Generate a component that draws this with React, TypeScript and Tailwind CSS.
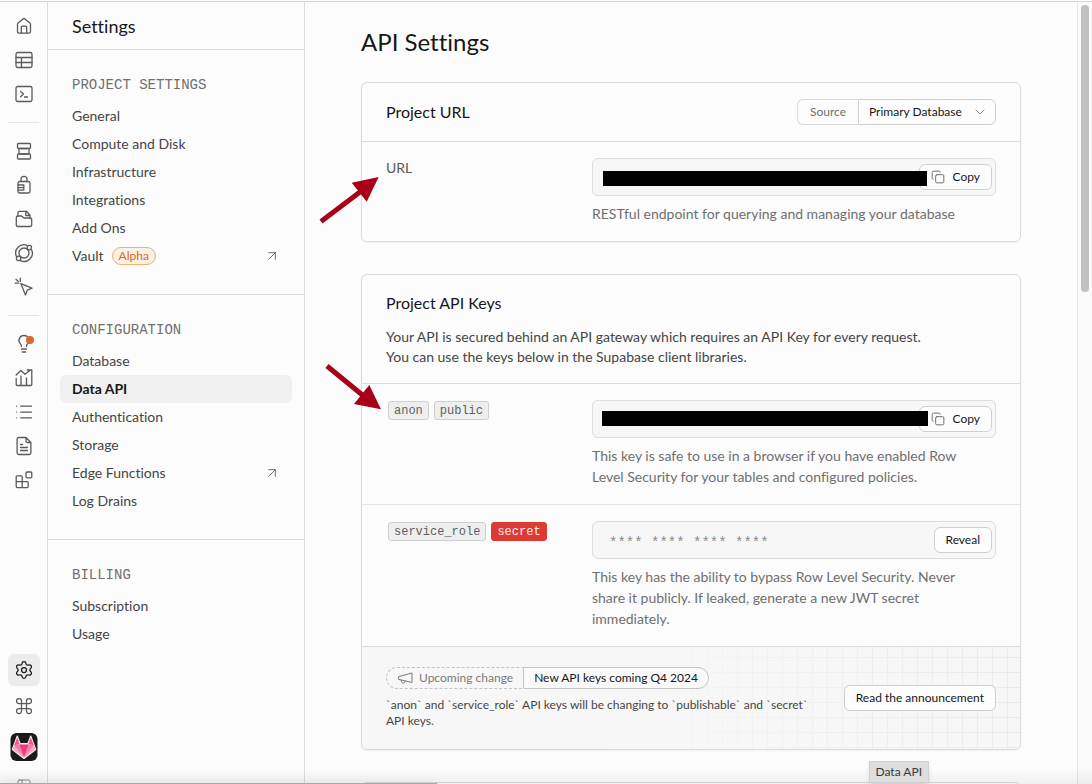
import type { ReactNode } from 'react';
import { ArrowUpRight, ChevronDown, Command, Copy, List, PanelLeft, Settings } from 'lucide-react';

function Glyph({ children }: { children: ReactNode }) {
  return (
    <svg
      width="20"
      height="20"
      viewBox="0 0 20 20"
      fill="none"
      stroke="currentColor"
      strokeWidth="1.3"
      strokeLinecap="round"
      strokeLinejoin="round"
      aria-hidden="true"
    >
      {children}
    </svg>
  );
}

type RailItem = { label: string; icon: ReactNode; dot?: boolean };

const editorItems: RailItem[] = [
  {
    label: 'Home',
    icon: (
      <Glyph>
        <path d="M3.500 8.200c0-.6.200-1 .6-1.300l4.900-4c.6-.5 1.400-.5 2 0l4.900 4c.4.300.6.700.6 1.300v7.400c0 .9-.7 1.600-1.600 1.600H5.100c-.9 0-1.600-.7-1.600-1.600z" />
        <path d="M7.300 17v-5.800c0-.6.400-1 1-1h3.400c.6 0 1 .4 1 1V17" />
      </Glyph>
    ),
  },
  {
    label: 'Table Editor',
    icon: (
      <Glyph>
        <rect x="2" y="2.500" width="16" height="15" rx="1.700" />
        <path d="M2 7.500h16M2 12.500h16M7.500 7.500v10" />
      </Glyph>
    ),
  },
  {
    label: 'SQL Editor',
    icon: (
      <Glyph>
        <rect x="2" y="2.500" width="16" height="15" rx="1.700" />
        <path d="M6.500 7.500 9.500 10l-3 2.800M10.500 13h3" />
      </Glyph>
    ),
  },
];

const productItems: RailItem[] = [
  {
    label: 'Database',
    icon: (
      <Glyph>
        <rect x="3.500" y="2.500" width="13" height="5" rx="1" />
        <rect x="3.500" y="13" width="13" height="5" rx="1" />
        <path d="M5 7.500V13M15 7.500V13M6.500 7.500h7M6.500 13h7" />
      </Glyph>
    ),
  },
  {
    label: 'Authentication',
    icon: (
      <Glyph>
        <rect x="4" y="6.500" width="12" height="11.500" rx="1.700" />
        <path d="M7 6.500V4.300a3 3 0 0 1 6 0v2.200M4 10h5.500M4 12.600h5.500M4 15.200h5.500M9.800 10v5.200" />
      </Glyph>
    ),
  },
  {
    label: 'Storage',
    icon: (
      <Glyph>
        <path d="M4 7V3.700C4 2.800 4.600 2.300 5.400 2.300h7L16 6v3M11.800 2.500V6.500H16" />
        <path d="M2.300 8.500c0-.9.600-1.500 1.500-1.500H7.500l2.500 2h6.200c.9 0 1.500.6 1.500 1.500v5.300c0 1-.7 1.700-1.700 1.700H4c-1 0-1.700-.7-1.700-1.700z" />
      </Glyph>
    ),
  },
  {
    label: 'Edge Functions',
    icon: (
      <Glyph>
        <circle cx="10" cy="10" r="5" />
        <path d="M13.200 2.300A8.300 8.300 0 0 0 2.600 13.700M6.500 17.600A8.300 8.300 0 0 0 17.600 6.700" />
        <circle cx="15.300" cy="4.600" r="2.200" />
        <circle cx="4.600" cy="15.400" r="2.200" />
      </Glyph>
    ),
  },
  {
    label: 'Realtime',
    icon: (
      <Glyph>
        <path d="m6.800 6.600 4.700 11.400 1.800-4.900L18 11.200zM6.300 1.200V4.500M1.300 6.200H4.800M2 2.300 4.300 4.400" />
      </Glyph>
    ),
  },
];

const toolItems: RailItem[] = [
  {
    label: 'Advisors',
    dot: true,
    icon: (
      <Glyph>
        <path d="M7.500 12.500c0-1.500-.7-2.300-1.400-3.100A4.800 4.800 0 0 1 9.900 1.500a4.800 4.800 0 0 1 3.900 7.900c-.7.8-1.400 1.600-1.400 3.100M7.500 15h5M8.300 18h3.400" />
      </Glyph>
    ),
  },
  {
    label: 'Reports',
    icon: (
      <Glyph>
        <path d="M2.200 10.500v5.800c0 .7.500 1.200 1.200 1.200h13.200c.7 0 1.200-.5 1.200-1.200V6.500M2.200 7l4.600-4.500L11 6.300l5-4M13.300 2h4.500v3.500M7 8v9.500M12.500 10v7.500" />
      </Glyph>
    ),
  },
  { label: 'Logs', icon: <List size={20} strokeWidth={1.5} /> },
  {
    label: 'API Docs',
    icon: (
      <Glyph>
        <path d="M12 1.500H4.800c-1 0-1.700.7-1.700 1.700v13.600c0 1 .7 1.700 1.700 1.700h10.400c1 0 1.700-.7 1.700-1.700V6.500zM12 1.700V5c0 .8.600 1.500 1.500 1.500h3.300M6.500 8.500h2M6.500 11.500h7M6.500 14.500h7" />
      </Glyph>
    ),
  },
  {
    label: 'Integrations',
    icon: (
      <Glyph>
        <rect x="12" y="2" width="5.800" height="5.800" rx="1" />
        <path d="M8.200 11.700V6.800c0-.6-.4-1-1-1H3.200c-.6 0-1 .4-1 1v9.800c0 .6.400 1 1 1h10c.6 0 1-.4 1-1v-3.900c0-.6-.4-1-1-1h-11M8.200 11.700v5.900" />
      </Glyph>
    ),
  },
];

function RailGroup({ items }: { items: RailItem[] }) {
  return (
    <div className="flex flex-col gap-0.5">
      {items.map((item) => (
        <a key={item.label} href="#" aria-label={item.label} className="relative flex size-8 items-center justify-center text-[#5a5a5a]">
          {item.icon}
          {item.dot && <span className="absolute top-2 right-1.5 size-2 rounded-full bg-[#d9682b]" />}
        </a>
      ))}
    </div>
  );
}

function Rail() {
  return (
    <nav aria-label="Main" className="flex w-12 shrink-0 flex-col justify-between border-r border-[#dcdcdc] pt-2 pl-2">
      <div>
        <RailGroup items={editorItems} />
        <hr className="my-3 mr-2 border-[#e6e6e6]" />
        <RailGroup items={productItems} />
        <hr className="my-3 mr-2 border-[#e6e6e6]" />
        <RailGroup items={toolItems} />
      </div>
      <div className="-mb-3 flex w-8 flex-col items-center">
        <a href="#" aria-label="Project Settings" className="mb-1 flex size-8 items-center justify-center rounded-md bg-[#ebebeb] text-[#171717]">
          <Settings size={20} strokeWidth={1.5} />
        </a>
        <button type="button" aria-label="Command menu" className="flex size-8 items-center justify-center text-[#5a5a5a]">
          <Command size={20} strokeWidth={1.5} />
        </button>
        <button type="button" aria-label="Account" className="mt-[11px] mb-[15px]">
          <svg width="28" height="28" viewBox="0 0 28 28" aria-hidden="true">
            <rect x="0.500" width="27" height="28" rx="6" fill="#1b1b1b" />
            <path d="M7.300 3 10 10.500h8L20.700 3 25.700 16.500 14 25.500 2.300 16.500z" fill="#f9d3e0" stroke="#f9e3ea" strokeWidth="1.200" strokeLinejoin="round" />
            <path d="M7.300 4.500 9.500 11 4 12.500zM20.700 4.500 18.500 11l5.500 1.500z" fill="#ee5a92" />
            <path d="M9 11.500h10L14 24.500z" fill="#e8407e" />
            <path d="M4 12.500 9 11.500 14 24.500zM24 12.500 19 11.500 14 24.500z" fill="#f27ba7" />
            <path d="M4 12.500 3 16.300 14 24.500zM24 12.500l1 3.800L14 24.500z" fill="#f7a6c3" />
          </svg>
        </button>
        <button type="button" aria-label="Toggle sidebar" className="flex h-5 items-center text-[#777]">
          <PanelLeft size={16} strokeWidth={1.3} />
        </button>
      </div>
    </nav>
  );
}

type MenuItem = { label: string; active?: boolean; external?: boolean; badge?: string };

const sections: { title: string; items: MenuItem[] }[] = [
  {
    title: 'PROJECT SETTINGS',
    items: [
      { label: 'General' },
      { label: 'Compute and Disk' },
      { label: 'Infrastructure' },
      { label: 'Integrations' },
      { label: 'Add Ons' },
      { label: 'Vault', badge: 'Alpha', external: true },
    ],
  },
  {
    title: 'CONFIGURATION',
    items: [
      { label: 'Database' },
      { label: 'Data API', active: true },
      { label: 'Authentication' },
      { label: 'Storage' },
      { label: 'Edge Functions', external: true },
      { label: 'Log Drains' },
    ],
  },
  { title: 'BILLING', items: [{ label: 'Subscription' }, { label: 'Usage' }] },
];

function Sidebar() {
  return (
    <aside className="w-[257px] shrink-0 border-r border-[#dcdcdc]">
      <div className="flex h-12 items-center border-b border-[#dcdcdc] px-6">
        <h2 className="text-lg text-[#171717]">Settings</h2>
      </div>
      {sections.map((section) => (
        <section key={section.title} className="border-b border-[#dcdcdc] px-3 py-6 last:border-b-0">
          <h3 className="px-3 pb-1.5 font-['Liberation_Mono',monospace] text-sm leading-[22px] text-[#6f6f6f]">{section.title}</h3>
          <ul>
            {section.items.map((item) => (
              <li key={item.label}>
                <a
                  href="#"
                  aria-current={item.active ? 'page' : undefined}
                  className={
                    item.active
                      ? 'flex h-7 items-center rounded-md bg-[#f0f0f0] px-3 text-sm font-bold text-[#171717]'
                      : 'flex h-7 items-center px-3 text-sm text-[#454545]'
                  }
                >
                  {item.label}
                  {item.badge && (
                    <span className="ml-2 rounded-full border border-[#f3b06a] bg-[#fdf1e4] px-1.5 text-xs text-[#d9682b]">{item.badge}</span>
                  )}
                  {item.external && <ArrowUpRight size={16} strokeWidth={1.5} className="ml-auto text-[#6f6f6f]" />}
                </a>
              </li>
            ))}
          </ul>
        </section>
      ))}
    </aside>
  );
}

function SmallButton({ children }: { children: ReactNode }) {
  return (
    <button type="button" className="flex h-[26px] shrink-0 items-center gap-2 rounded-md border border-[#cfcfcf] bg-[#fdfdfd] px-[11px] text-xs whitespace-nowrap text-[#171717]">
      {children}
    </button>
  );
}

function Field({ id, label, value, hint, masked, children }: { id: string; label?: string; value: string; hint: string; masked?: 'url' | 'key'; children: ReactNode }) {
  return (
    <div className="col-span-2">
      <div className="relative flex h-[38px] items-center rounded-md border border-[#dcdcdc] bg-[#f7f7f7] pr-[3px]">
        <input
          id={id}
          readOnly
          aria-label={label}
          defaultValue={value}
          className="min-w-0 flex-1 bg-transparent px-4 pt-1.5 font-['Liberation_Mono',monospace] text-sm text-[#8a8a8a] outline-none"
        />
        {children}
        {masked === 'url' && <span className="absolute top-3 right-[68px] left-2.5 h-[15px] bg-black" />}
        {masked === 'key' && <span className="absolute top-2.5 right-[67px] left-[9px] h-[15px] bg-black" />}
      </div>
      <p className="pt-[7px] pr-4 pb-px text-sm leading-[21px] text-[#6f6f6f]">{hint}</p>
    </div>
  );
}

function Chip({ children, danger }: { children: ReactNode; danger?: boolean }) {
  return (
    <code
      className={
        danger
          ? "rounded-[3px] border border-[#de3a34] bg-[#de3a34] px-[5px] pt-0.5 font-['Liberation_Mono',monospace] text-xs leading-[15px] text-[#fdeeee]"
          : "rounded-[3px] border border-[#cfcfcf] bg-[#eeeeee] px-[5px] pt-0.5 font-['Liberation_Mono',monospace] text-xs leading-[15px] text-[#5f5f5f]"
      }
    >
      {children}
    </code>
  );
}

function CopyButton() {
  return (
    <SmallButton>
      <Copy size={14} strokeWidth={1.7} className="text-[#6f6f6f]" />
      Copy
    </SmallButton>
  );
}

function MegaphoneIcon() {
  return (
    <svg width="15" height="14" viewBox="0 0 15 14" fill="none" stroke="currentColor" strokeLinecap="round" strokeLinejoin="round" aria-hidden="true">
      <path d="M1 5.500 14 2v9.500L1 8.500zM3.300 9c-.2 2 .6 3 1.900 3s1.900-.8 2.100-2" />
    </svg>
  );
}

export default function App() {
  return (
    <div className="relative flex h-screen overflow-hidden border-t border-[#fcfcfc] bg-[#fcfcfc] font-['Lato',sans-serif] [font-variant-ligatures:none]">
      <div className="flex min-w-0 flex-1 border-t border-[#d6d6d6]">
        <Rail />
        <Sidebar />
        <main className="min-w-0 flex-1 overflow-hidden px-14 pt-6">
          <h1 className="mb-6 text-2xl text-[#171717]">API Settings</h1>

          <section className="mb-8 rounded-md border border-[#dcdcdc] shadow-xs">
            <header className="flex h-[59px] items-center justify-between border-b border-[#dcdcdc] px-6">
              <h2 className="text-base text-[#171717]">Project URL</h2>
              <div className="flex h-[26px] text-xs">
                <label htmlFor="source" className="flex items-center rounded-l-md border border-r-0 border-[#dcdcdc] px-3 text-[#6f6f6f]">
                  Source
                </label>
                <div className="relative flex">
                  <select id="source" className="w-[138px] appearance-none rounded-r-md border border-[#cfcfcf] bg-[#fdfdfd] px-2.5 text-[#171717]">
                    <option>Primary Database</option>
                  </select>
                  <ChevronDown size={16} strokeWidth={1.3} className="pointer-events-none absolute top-[5px] right-2 text-[#6f6f6f]" />
                </div>
              </div>
            </header>
            <div className="relative grid grid-cols-3 gap-2 px-6 py-4">
              <label htmlFor="url" className="text-sm text-[#5a5a5a]">
                URL
              </label>
              <Field id="url" value="" hint="RESTful endpoint for querying and managing your database" masked="url">
                <CopyButton />
              </Field>
              <svg className="absolute top-[33px] -left-11" width="64" height="50" viewBox="0 0 64 50" aria-hidden="true">
                <path d="M3 46.500 42 17" stroke="#a90019" strokeWidth="5" />
                <path d="M60.700 2 33.700 7.700 48.700 26.700z" fill="#a90019" />
              </svg>
            </div>
          </section>

          <section className="mb-8 rounded-md border border-[#dcdcdc] shadow-xs">
            <header className="border-b border-[#dcdcdc] px-6 py-4">
              <h2 className="text-base leading-6 text-[#171717]">Project API Keys</h2>
              <p className="mt-3 text-sm text-[#454545]">
                Your API is secured behind an API gateway which requires an API Key for every request.
                <br />
                You can use the keys below in the Supabase client libraries.
              </p>
            </header>
            <div className="relative grid grid-cols-3 gap-2 border-b border-[#e6e6e6] px-6 py-4">
              <div className="flex items-start gap-[5px] pt-px pl-0.5">
                <Chip>anon</Chip>
                <Chip>public</Chip>
              </div>
              <Field
                id="anon-key"
                label="anon public key"
                value=""
                hint="This key is safe to use in a browser if you have enabled Row Level Security for your tables and configured policies."
                masked="key"
              >
                <CopyButton />
              </Field>
              <svg className="absolute -top-[21px] -left-[38px]" width="60" height="50" viewBox="0 0 60 50" aria-hidden="true">
                <path d="M3 3 39 32.500" stroke="#a90019" strokeWidth="5" />
                <path d="M57 46.300 30 41 45.300 22z" fill="#a90019" />
              </svg>
            </div>
            <div className="grid grid-cols-3 gap-2 px-6 py-4">
              <div className="flex items-start gap-[5px] pt-px pl-0.5">
                <Chip>service_role</Chip>
                <Chip danger>secret</Chip>
              </div>
              <Field
                id="service-key"
                label="service_role secret key"
                value="**** **** **** ****"
                hint="This key has the ability to bypass Row Level Security. Never share it publicly. If leaked, generate a new JWT secret immediately."
              >
                <SmallButton>Reveal</SmallButton>
              </Field>
            </div>
            <footer className="relative flex items-center justify-between gap-8 rounded-b-md border-t border-[#dcdcdc] bg-[#f7f7f7] px-6 py-5">
              <div className="absolute inset-y-0 right-0 w-[420px] bg-[linear-gradient(to_right,#eaeaea_1px,transparent_1px),linear-gradient(to_bottom,#eaeaea_1px,transparent_1px)] bg-[size:15px_15px] bg-[position:2px_10px] [mask-image:linear-gradient(to_right,transparent,black)]" />
              <div className="relative">
                <div className="flex h-[22px] w-fit text-xs">
                  <span className="flex items-center gap-1.5 rounded-l-full border border-r-0 border-dashed border-[#c4c4c4] pr-2.5 pl-[11px] text-[#7a7a7a]">
                    <MegaphoneIcon />
                    Upcoming change
                  </span>
                  <span className="flex items-center rounded-r-full border border-l border-[#c4c4c4] bg-[#fafafa] px-2.5 text-[#171717]">
                    New API keys coming Q4 2024
                  </span>
                </div>
                <p className="mt-2 text-xs text-[#454545]">
                  `anon` and `service_role` API keys will be changing to `publishable` and `secret` API keys.
                </p>
              </div>
              <div className="relative">
                <SmallButton>Read the announcement</SmallButton>
              </div>
            </footer>
          </section>
          <section className="h-24 rounded-md border border-[#dcdcdc]" />
        </main>
        <div className="w-[15px] shrink-0 border-l border-[#e6e6e6] bg-[#fafafa] pt-[3px] pl-[3px]">
          <div className="h-[287px] w-2 rounded-full bg-[#c1c1c1]" />
        </div>
      </div>
      <div className="pointer-events-none absolute inset-x-0 bottom-0 h-4 bg-linear-to-b from-transparent to-black/5" />
      <div className="pointer-events-none absolute bottom-0 left-0 h-px w-[437px] bg-[#a8a8a8] shadow-[0_0_8px_rgba(0,0,0,0.25)]" />
      <div role="tooltip" className="absolute right-[163px] bottom-px border border-[#cfcfcf] bg-[#dedede] px-1.5 text-xs leading-5 text-[#3a3a3a] shadow-md">
        Data API
      </div>
    </div>
  );
}
